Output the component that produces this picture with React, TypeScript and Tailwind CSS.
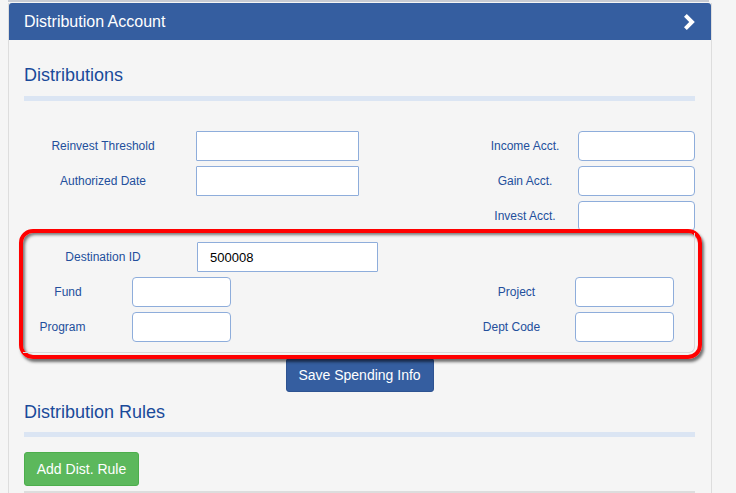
const labelCls = "text-[12px] leading-[14px] text-[#234f9c] text-center";
const inputCls =
  "h-[30px] bg-white border border-[#8eaddb] outline-none px-[12px] text-[13px] text-black font-['Liberation_Sans',Arial,sans-serif]";

function Heading({ children }: { children: string }) {
  return <h2 className="h-[20px] leading-[20px] text-[18px] text-[#1a4a9a]">{children}</h2>;
}

function Field({
  label,
  labelW,
  gap,
  inputW,
  rounded,
  value,
}: {
  label: string;
  labelW: number;
  gap: number;
  inputW: number;
  rounded?: boolean;
  value?: string;
}) {
  return (
    <div className="flex items-center h-[30px]">
      <span className={labelCls} style={{ width: labelW }}>
        {label}
      </span>
      <input
        readOnly
        defaultValue={value}
        className={`${inputCls} ${rounded ? "rounded-[4px]" : "rounded-[1px]"}`}
        style={{ width: inputW, marginLeft: gap }}
      />
    </div>
  );
}

export default function App() {
  return (
    <div className="w-[736px] h-[493px] overflow-hidden bg-[#f5f5f5] font-['Liberation_Sans',Arial,sans-serif]">
      {/* bottom edge of the previous panel */}
      <div className="h-[2px] ml-[8px] w-[701px] bg-[#c7cbd3]" />

      <div className="ml-[8px] w-[704px] h-[491px] mt-px border-x border-[#dddddd]">
        <div className="h-[37px] bg-[#355ea0] rounded-t-[3px] flex items-center justify-between pl-[15px] pr-[16px]">
          <span className="text-white text-[16px]">Distribution Account</span>
          <svg width="11" height="16" viewBox="0 0 11 16">
            <polygon points="0,2.8 2.8,0 10.8,8 2.8,16 0,13.2 5.2,8" fill="white" />
          </svg>
        </div>

        <div className="pl-[15px] pr-[16px] pt-[25px]">
          <Heading>Distributions</Heading>
          <div className="mt-[11px] h-[5px] bg-[#dbe5f3]" />

          <div className="mt-[30px] flex justify-between">
            <div className="flex flex-col gap-[5px]">
              <Field label="Reinvest Threshold" labelW={158} gap={14} inputW={163} />
              <Field label="Authorized Date" labelW={158} gap={14} inputW={163} />
            </div>
            <div className="flex flex-col gap-[5px]">
              <Field label="Income Acct." labelW={78} gap={14} inputW={117} rounded />
              <Field label="Gain Acct." labelW={78} gap={14} inputW={117} rounded />
              <Field label="Invest Acct." labelW={78} gap={14} inputW={117} rounded />
            </div>
          </div>

          {/* highlighted spending section */}
          <div className="relative z-10 -mt-[2px] -ml-[5px] -mr-[7px] border-[4px] border-[#ff0000] rounded-[14px] shadow-[2px_3px_3px_rgba(0,0,0,0.55),inset_2px_2px_3px_rgba(0,0,0,0.5)]">
            <div className="mr-[3px] mb-[2px] border-r border-b border-[#d9d9d9] rounded-br-[6px] pt-[9px] pb-[10px] flex flex-col gap-[5px]">
              <div className="pl-px">
                <Field label="Destination ID" labelW={158} gap={15} inputW={181} value="500008" />
              </div>
              <div className="flex justify-between pl-px pr-[20px]">
                <div className="flex flex-col gap-[5px]">
                  <div className="flex items-center h-[30px]">
                    <span className={`${labelCls} w-[88px]`}>Fund</span>
                    <input readOnly className={`${inputCls} rounded-[4px] w-[99px] ml-[20px]`} />
                  </div>
                  <div className="flex items-center h-[30px]">
                    <span className={`${labelCls} w-[77px]`}>Program</span>
                    <input readOnly className={`${inputCls} rounded-[4px] w-[99px] ml-[31px]`} />
                  </div>
                </div>
                <div className="flex flex-col gap-[5px]">
                  <div className="flex items-center h-[30px]">
                    <span className={`${labelCls} w-[93px]`}>Project</span>
                    <input readOnly className={`${inputCls} rounded-[4px] w-[99px] ml-[12px]`} />
                  </div>
                  <div className="flex items-center h-[30px]">
                    <span className={`${labelCls} w-[83px]`}>Dept Code</span>
                    <input readOnly className={`${inputCls} rounded-[4px] w-[99px] ml-[22px]`} />
                  </div>
                </div>
              </div>
            </div>
          </div>

          <button className="block mx-auto -mt-[1px] w-[148px] h-[34px] bg-[#355ea0] border border-[#2e5391] rounded-[3px] text-white text-[14px]">
            Save Spending Info
          </button>

          <div className="mt-[10px]">
            <Heading>Distribution Rules</Heading>
          </div>
          <div className="mt-[10px] h-[5px] bg-[#dbe5f3]" />

          <button className="mt-[15px] w-[115px] h-[34px] bg-[#5cb85c] border border-[#4cae4c] rounded-[3px] text-white text-[14px]">
            Add Dist. Rule
          </button>
          <div className="mt-[5px] h-[2px] bg-[#dddddd]" />
        </div>
      </div>
    </div>
  );
}
